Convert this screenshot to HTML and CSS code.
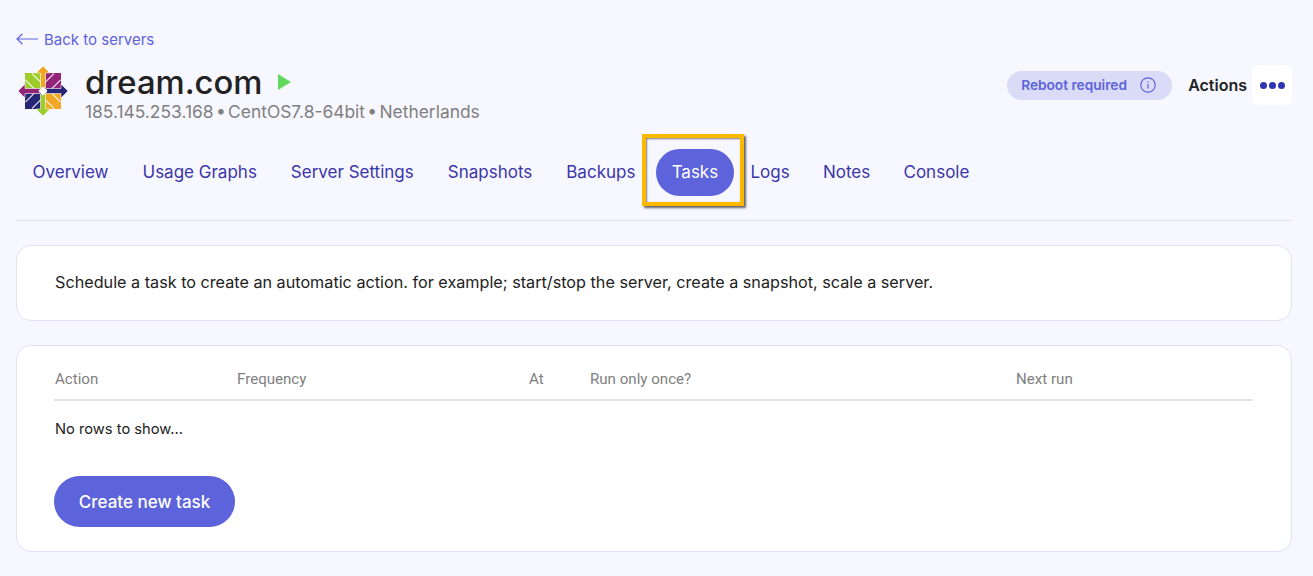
FILE: index.html
```html
<!DOCTYPE html>
<html lang="en">
<head>
<meta charset="utf-8">
<title>dream.com - Tasks</title>
<link rel="stylesheet" href="styles.css">
</head>
<body>
<div class="page">
  <a class="back" href="#">
    <svg class="back-icon" width="22" height="12" viewBox="0 0 22 12" fill="none" stroke="#5d63db" stroke-width="1.2"><path d="M22 6H1M6.500 .8 1 6l5.500 5.200"/></svg>
    <span>Back to servers</span>
  </a>
  <header class="head">
    <svg class="logo" width="50" height="50" viewBox="0 0 50 50">
      <path fill="#9ccd2a" d="M7 7h16.500v16.500H7z"/>
      <path fill="#932279" d="M26.500 7H43v16.500H26.500z"/>
      <path fill="#efa724" d="M26.500 26.500H43V43H26.500z"/>
      <path fill="#262577" d="M7 26.500h16.500V43H7z"/>
      <path fill="none" stroke="#fff" stroke-width="1.100" opacity=".8" d="M7.500 14l9.500 9.500M14 7.500l9.500 9.500M42.500 14 33 23.500M36 7.500 26.500 17M42.500 36 33 26.500M36 42.500 26.500 33M7.500 36l9.500-9.500M14 42.500l9.500-9.500"/>
      <path fill="#efa724" stroke="#fff" stroke-width=".6" d="M25 0l7 7h-4.500v15h-5V7H18z"/>
      <path fill="#262577" stroke="#fff" stroke-width=".6" d="M50 25l-7 7v-4.500H28v-5h15V18z"/>
      <path fill="#9ccd2a" stroke="#fff" stroke-width=".6" d="M25 50l-7-7h4.500V28h5v15H32z"/>
      <path fill="#932279" stroke="#fff" stroke-width=".6" d="M0 25l7-7v4.500h15v5H7V32z"/>
      <path fill="#fff" d="M25 20.500l4.500 4.500-4.500 4.500-4.500-4.500z"/>
    </svg>
    <div class="title-block">
      <div class="title-row">
        <h1 class="title">dream.com</h1>
        <svg class="play" width="13" height="16" viewBox="0 0 13 16"><path fill="#62d85f" d="M0 0l13 8-13 8z"/></svg>
      </div>
      <p class="meta">185.145.253.168 • CentOS7.8-64bit • Netherlands</p>
    </div>
    <div class="head-right">
      <span class="badge">Reboot required
        <svg class="info" width="16" height="16" viewBox="0 0 16 16" fill="none" stroke="#5d63db" stroke-width="1.200"><circle cx="8" cy="8" r="7.200"/><path d="M8 7v4.500M8 4.200v1.200"/></svg>
      </span>
      <span class="actions-label">Actions</span>
      <button class="dots" type="button" aria-label="Actions"><i></i><i></i><i></i></button>
    </div>
  </header>
  <nav class="tabs">
    <a class="tab" href="#">Overview</a>
    <a class="tab" href="#">Usage Graphs</a>
    <a class="tab" href="#">Server Settings</a>
    <a class="tab" href="#">Snapshots</a>
    <a class="tab" href="#">Backups</a>
    <a class="tab tab-active" href="#">Tasks</a>
    <a class="tab" href="#">Logs</a>
    <a class="tab" href="#">Notes</a>
    <a class="tab" href="#">Console</a>
  </nav>
  <section class="card intro">Schedule a task to create an automatic action. for example; start/stop the server, create a snapshot, scale a server.</section>
  <section class="card list">
    <div class="thead">
      <span class="c-action">Action</span>
      <span class="c-freq">Frequency</span>
      <span class="c-at">At</span>
      <span class="c-once">Run only once?</span>
      <span class="c-next">Next run</span>
    </div>
    <p class="empty">No rows to show...</p>
    <button class="create" type="button">Create new task</button>
  </section>
</div>
</body>
</html>
```
FILE: styles.css
```css
* { box-sizing: border-box; }
html, body { margin: 0; height: 100%; }
body {
  background: #f7f7ff;
  font-family: Inter, "Noto Sans", sans-serif;
  color: #222;
  overflow: hidden;
}
.page { padding: 30px 21px 0 16px; }
.back {
  display: flex; align-items: center; gap: 6px;
  height: 18px;
  color: #5d63db; font-size: 15px; text-decoration: none;
}
.head { display: flex; align-items: center; margin-top: 18px; padding-left: 2px; height: 50px; }
.logo { flex: none; }
.title-block { margin-left: 17px; padding-top: 5px; }
.title-row { display: flex; align-items: center; gap: 16px; height: 32px; }
.title { margin: 0; font-size: 32.800px; font-weight: 500; line-height: 32px; color: #222; }
.play { flex: none; }
.meta { margin: 4px 0 0; font-size: 17.400px; word-spacing: -2.500px; line-height: 20px; color: #808080; white-space: nowrap; }
.head-right { margin-left: auto; display: flex; align-items: center; margin-top: -12px; }
.badge {
  display: flex; align-items: center; gap: 13px;
  width: 165px; height: 29px; padding: 0 0 0 14px;
  border-radius: 15px; background: #d9dbf7;
  color: #5d63db; font-size: 13.700px; font-weight: 600; white-space: nowrap;
}
.info { flex: none; }
.actions-label { margin-left: 16px; font-size: 16px; font-weight: 600; color: #222; white-space: nowrap; }
.dots {
  width: 40px; height: 40px; margin-left: 5px; padding: 0;
  display: flex; align-items: center; justify-content: center; gap: 2px;
  border: 0; border-radius: 7px; background: #fff;
}
.dots i { width: 7px; height: 7px; border-radius: 50%; background: #3034b5; }
.tabs {
  display: flex; align-items: center;
  margin-top: 33px; height: 72px; padding-left: 16.500px;
  border-bottom: 1px solid #e0e0f5;
}
.tab { font-size: 17px; color: #3a35a8; text-decoration: none; margin-right: 34px; margin-top: -25px; line-height: 47px; }
.tab-active {
  position: relative;
  height: 47px; line-height: 47px; width: 78px; text-align: center; flex: none;
  margin-left: -13.500px; margin-right: 16.500px;
  border-radius: 24px; background: #5d63db; color: #fff;
}
.tab-active::after {
  content: ""; position: absolute; left: -14px; top: -15px;
  box-sizing: border-box;
  width: 102px; height: 72px;
  border: 4px solid #fdb900;
  box-shadow: 2px 2px 2px rgba(0,0,0,.6), inset 1px 1px 2px rgba(0,0,0,.5);
}
.tab-active + .tab, .tab-active + .tab ~ .tab { margin-right: 33.300px; }
.card {
  background: #fff; border: 1px solid #e0e0f8; border-radius: 15px;
}
.intro {
  margin-top: 24px; height: 76px; padding: 0 37px 2px 38px;
  display: flex; align-items: center;
  font-size: 16.200px; color: #222;
}
.list { margin-top: 24px; height: 207px; padding: 0 38px 0 37px; }
.thead {
  display: flex; align-items: center; height: 55px; padding-top: 12px;
  border-bottom: 2px solid #e3e3e3;
  font-family: Roboto, Inter, sans-serif;
  font-size: 15.100px; color: #808080;
}
.thead span { display: block; padding-left: 1px; }
.c-action { width: 182px; }
.c-freq { width: 292px; }
.c-at { width: 61px; }
.c-once { width: 426px; }
.empty { margin: 19px 0 0; padding-left: 1px; font-size: 14.700px; line-height: 18px; color: #222; }
.create {
  display: block; margin-top: 38px;
  width: 181px; height: 51px;
  border: 0; border-radius: 26px; background: #5d63db;
  color: #fff; font: 500 17px Inter, "Noto Sans", sans-serif;
}
```
